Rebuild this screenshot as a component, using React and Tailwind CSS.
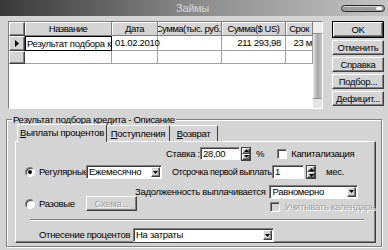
import React from 'react';

const raised = 'border border-t-white border-l-white border-b-[#404040] border-r-[#404040] shadow-[inset_-1px_-1px_0_#808080]';
const sunken = 'border border-t-[#808080] border-l-[#808080] border-b-white border-r-white shadow-[inset_1px_1px_0_#404040]';

function Btn({ children, w = 'w-[52px]', def, disabled, className = '' }) {
  return (
    <div className={`${def ? 'border border-black' : ''} ${className}`}>
      <div className={`${raised} ${w} h-[15px] bg-[#d4d4d4] flex items-center justify-center leading-none ${disabled ? 'text-[#a0a0a0] [text-shadow:1px_1px_0_#fff]' : ''}`}>
        {children}
      </div>
    </div>
  );
}

function Arrow({ up }) {
  return (
    <svg width="5" height="3" viewBox="0 0 5 3">
      <path d={up ? 'M2.5 0 L5 3 L0 3 Z' : 'M0 0 L5 0 L2.5 3 Z'} fill="#000" />
    </svg>
  );
}

function Select({ value, w }) {
  return (
    <div className={`${sunken} ${w} h-[14px] shrink-0 bg-white flex items-center`}>
      <span className="flex-1 pl-[2px] leading-none truncate">{value}</span>
      <div className={`${raised} w-[9px] h-[10px] mr-[1px] bg-[#d4d4d4] flex items-center justify-center`}>
        <Arrow />
      </div>
    </div>
  );
}

function Spinner() {
  return (
    <div className="w-[10px] h-[14px] flex flex-col border border-[#404040]">
      <div className={`${raised} flex-1 bg-[#d4d4d4] flex items-center justify-center`}><Arrow up /></div>
      <div className={`${raised} flex-1 bg-[#d4d4d4] flex items-center justify-center`}><Arrow /></div>
    </div>
  );
}

function Radio({ checked }) {
  return (
    <div className="w-[10px] h-[10px] rounded-full bg-white border border-t-[#808080] border-l-[#808080] border-b-white border-r-white shadow-[inset_1px_1px_0_#404040] flex items-center justify-center">
      {checked && <div className="w-[4px] h-[4px] rounded-full bg-black" />}
    </div>
  );
}

function Check({ disabled }) {
  return <div className={`${sunken} w-[10px] h-[10px] ${disabled ? 'bg-[#d4d4d4]' : 'bg-white'}`} />;
}

const cols = [
  { w: 'w-[87px]', t: 'Название' },
  { w: 'w-[46px]', t: 'Дата' },
  { w: 'w-[64px]', t: 'Сумма(тыс. руб.)' },
  { w: 'w-[64px]', t: 'Сумма($ US)' },
  { w: 'w-[27px]', t: 'Срок' },
];

export default function App() {
  return (
    <div className="w-[388px] h-[250px] bg-[#d4d4d4] overflow-hidden text-[9.5px] [letter-spacing:-0.3px] text-black whitespace-nowrap font-['Liberation_Sans',Arial,sans-serif]">
      {/* title bar */}
      <div className="h-[16px] flex items-center bg-gradient-to-r from-[#3a3a3a] via-[#8a8a8a] to-[#c4c4c4]">
        <div className="flex-1" />
        <span className="text-[#d8d8d8] text-[11px] leading-none">Займы</span>
        <div className="flex-1 flex justify-end pr-[3px]">
          <div className="w-[44px] h-[7px] rounded-full border border-[#2a2a2a] bg-[#9c9c9c] flex items-center justify-end pr-[2px] shadow-[inset_0_1px_0_#d0d0d0]">
            <div className="w-[6px] h-[3px] rounded-full bg-white" />
          </div>
        </div>
      </div>

      {/* grid + buttons */}
      <div className="h-[103px] flex pt-[5px] pl-[8px]">
        <div className="w-[315px] h-[88px] border border-t-[#808080] border-l-[#808080] border-b-white border-r-white bg-white flex">
          <div className="w-[304px] flex flex-col">
            <div className="flex h-[14px]">
              <div className={`${raised} w-[16px] bg-[#d4d4d4]`} />
              {cols.map(c => (
                <div key={c.t} className={`${c.w} bg-[#d4d4d4] border-r border-b border-[#808080] shadow-[inset_1px_1px_0_#fff] flex items-center justify-center leading-none overflow-hidden [letter-spacing:-0.5px]`}>
                  {c.t}
                </div>
              ))}
            </div>
            <div className="flex h-[15px]">
              <div className={`${raised} w-[16px] bg-[#d4d4d4] flex items-center justify-center`}>
                <svg width="4" height="7" viewBox="0 0 4 7"><path d="M0 0 L4 3.5 L0 7 Z" fill="#000" /></svg>
              </div>
              <div className="w-[87px] border border-black flex items-center pl-[1px] leading-none overflow-hidden">Результат подбора кредита</div>
              <div className="w-[46px] border-r border-b border-[#a0a0a0] flex items-center pl-[3px] leading-none">01.02.2010</div>
              <div className="w-[64px] border-r border-b border-[#a0a0a0]" />
              <div className="w-[64px] border-r border-b border-[#a0a0a0] flex items-center justify-end pr-[4px] leading-none">211 293,98</div>
              <div className="w-[27px] border-r border-b border-[#a0a0a0] flex items-center justify-end leading-none overflow-hidden">23 м</div>
            </div>
            <div className="flex h-[13px]">
              <div className={`${raised} w-[16px] bg-[#d4d4d4]`} />
              {cols.map(c => (
                <div key={c.t} className={`${c.w} border-r border-b border-[#a0a0a0]`} />
              ))}
            </div>
          </div>
          <div className="w-[9px] flex flex-col bg-gradient-to-r from-[#e8e8e8] via-[#a8a8a8] to-[#c8c8c8]">
            <div className="h-[12px] bg-[#ececec] border-b border-[#909090]" />
            <div className="flex-1" />
            <div className="h-[10px] bg-[#e4e4e4] border-t border-[#909090]" />
          </div>
        </div>

        <div className="ml-[9px] flex flex-col gap-[2px]">
          <Btn def w="w-[50px]">OK</Btn>
          <Btn>Отменить</Btn>
          <Btn>Справка</Btn>
          <Btn>Подбор...</Btn>
          <Btn>Дефицит...</Btn>
        </div>
      </div>

      {/* group box */}
      <div className="relative mx-[6px] h-[128px] border border-[#808080] shadow-[inset_1px_1px_0_#fff,1px_1px_0_#fff] pl-[8px] pt-[3px]">
        <span className="absolute -top-[7px] left-[5px] px-[1px] bg-[#d4d4d4] leading-[13px]">Результат подбора кредита - Описание</span>

        {/* tabs */}
        <div className="flex items-end h-[18px] relative z-10">
          <div className="ml-[2px] w-[90px] h-[18px] bg-[#d4d4d4] border-t border-l border-r border-t-white border-l-white border-r-[#404040] rounded-t-[2px] flex items-center justify-center leading-none -mb-[1px] pb-[1px]">
            <span><span className="underline">В</span>ыплаты процентов</span>
          </div>
          <div className="w-[63px] h-[16px] border-t border-r border-t-white border-r-[#404040] rounded-t-[2px] flex items-center justify-center leading-none">
            <span><span className="underline">П</span>оступления</span>
          </div>
          <div className="w-[48px] h-[16px] border-t border-r border-t-white border-r-[#404040] rounded-t-[2px] flex items-center justify-center leading-none">
            <span><span className="underline">В</span>озврат</span>
          </div>
        </div>

        {/* tab page */}
        <div className={`${raised} w-[361px] h-[102px] flex flex-col`}>
          <div className="flex items-center h-[13px] mt-[5px] ml-[150px]">
            <span className="w-[32px] text-right leading-none">Ставка :</span>
            <div className={`${sunken} ml-[2px] w-[40px] h-[13px] bg-white flex items-center pl-[2px] leading-none`}>28,00</div>
            <div className="ml-[1px]"><Spinner /></div>
            <span className="ml-[5px] leading-none">%</span>
            <div className="ml-[13px]"><Check /></div>
            <span className="ml-[4px] leading-none">Капитализация</span>
          </div>

          <div className="flex items-center h-[14px] mt-[5px]">
            <div className="ml-[9px]"><Radio checked /></div>
            <span className="ml-[4px] w-[47px] shrink-0 leading-none">Регулярные</span>
            <Select value="Ежемесячно" w="w-[76px]" />
            <span className="ml-[10px] w-[100px] shrink-0 leading-none text-[9px] [letter-spacing:-0.4px]">Отсрочка первой выплаты</span>
            <div className={`${sunken} w-[32px] h-[14px] bg-white flex items-center pl-[2px] leading-none`}>1</div>
            <div className="ml-[2px]"><Spinner /></div>
            <span className="ml-[10px] leading-none">мес.</span>
          </div>

          <div className="flex mt-[6px]">
            <div className="w-[140px] pt-[12px]">
              <div className="flex items-center h-[13px]">
                <div className="ml-[9px]"><Radio /></div>
                <span className="ml-[4px] w-[47px] shrink-0 leading-none">Разовые</span>
                <Btn w="w-[51px]" disabled>Схема...</Btn>
              </div>
            </div>
            <div className="flex flex-col">
              <div className="flex items-center h-[13px]">
                <div className="w-[115px] flex justify-end leading-none">Задолженность выплачивается</div>
                <div className="ml-[4px]"><Select value="Равномерно" w="w-[89px]" /></div>
              </div>
              <div className="flex items-center mt-[4px] h-[10px]">
                <div className="ml-[120px]"><Check disabled /></div>
                <span className="ml-[4px] leading-none text-[#a0a0a0] [text-shadow:1px_1px_0_#fff]">Учитывать календарь</span>
              </div>
            </div>
          </div>

          <div className="ml-[14px] mt-[7px] w-[334px] h-[2px] border-t border-[#808080] border-b border-b-white" />

          <div className="flex items-center h-[14px] mt-[7px]">
            <span className="ml-[23px] w-[94px] shrink-0 leading-none">Отнесение процентов :</span>
            <Select value="На затраты" w="w-[141px]" />
          </div>
        </div>
      </div>
    </div>
  );
}
